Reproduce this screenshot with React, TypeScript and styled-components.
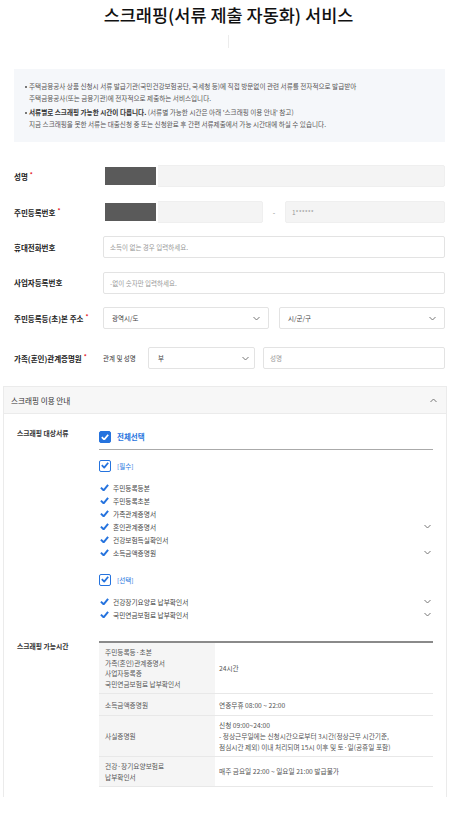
import styled, { createGlobalStyle } from 'styled-components'

const GlobalStyle = createGlobalStyle`
  * { box-sizing: border-box; }
  body {
    margin: 0;
    background: #fff;
    color: #222;
    font-family: 'Noto Sans CJK KR', 'Noto Sans', sans-serif;
  }
`

const BLUE = '#2573de'

const requiredDocs = [
  { name: '주민등록등본' },
  { name: '주민등록초본' },
  { name: '가족관계증명서' },
  { name: '혼인관계증명서', more: true },
  { name: '건강보험득실확인서' },
  { name: '소득금액증명원', more: true },
]

const optionalDocs = [
  { name: '건강장기요양료 납부확인서', more: true },
  { name: '국민연금보험료 납부확인서', more: true },
]

const timeRows = [
  {
    docs: ['주민등록등·초본', '가족(혼인)관계증명서', '사업자등록증', '국민연금보험료 납부확인서'],
    time: ['24시간'],
  },
  { docs: ['소득금액증명원'], time: ['연중무휴 08:00 ~ 22:00'] },
  {
    docs: ['사실증명원'],
    time: [
      '신청 09:00~24:00',
      '- 정상근무일에는 신청시간으로부터 3시간(정상근무 시간기준,',
      '점심시간 제외) 이내 처리되며 15시 이후 및 토·일(공휴일 포함)',
    ],
  },
  { docs: ['건강·장기요양보험료', '납부확인서'], time: ['매주 금요일 22:00 ~ 일요일 21:00 발급불가'] },
]

const Chevron = ({ up }: { up?: boolean }) => (
  <svg width="7" height="5" viewBox="0 0 7 5">
    <polyline
      points={up ? '0.5,4 3.5,1 6.5,4' : '0.5,1 3.5,4 6.5,1'}
      fill="none"
      stroke="#777"
      strokeWidth="1"
    />
  </svg>
)

const Tick = ({ color = BLUE, size = 9 }: { color?: string; size?: number }) => (
  <svg width={size} height={size * 0.8} viewBox="0 0 10 8">
    <polyline points="1,4 4,7 9,1" fill="none" stroke={color} strokeWidth="2.2" strokeLinejoin="round" />
  </svg>
)

const DocItem = ({ name, more }: { name: string; more?: boolean }) => (
  <Item>
    <ItemName>
      <Tick />
      {name}
    </ItemName>
    {more && <Chevron />}
  </Item>
)

export default function App() {
  return (
    <Page>
      <GlobalStyle />
      <Title>스크래핑(서류 제출 자동화) 서비스</Title>
      <TitleRule />

      <Notice>
        <NoticeItem>
          <Bullet />
          <p>
            주택금융공사 상품 신청시 서류 발급기관(국민건강보험공단, 국세청 등)에 직접 방문없이 관련 서류를 전자적으로 발급받아
            <br />
            주택금융공사(또는 금융기관)에 전자적으로 제출하는 서비스입니다.
          </p>
        </NoticeItem>
        <NoticeItem>
          <Bullet />
          <p>
            <strong>서류별로 스크래핑 가능한 시간이 다릅니다.</strong> (서류별 가능한 시간은 아래 '스크래핑 이용 안내' 참고)
            <br />
            지금 스크래핑을 못한 서류는 대출신청 중 또는 신청완료 후 간편 서류제출에서 가능 시간대에 하실 수 있습니다.
          </p>
        </NoticeItem>
      </Notice>

      <Form>
        <Row>
          <Label>
            성명<Req>*</Req>
          </Label>
          <Field disabled>
            <Redact />
          </Field>
        </Row>
        <Row>
          <Label>
            주민등록번호<Req>*</Req>
          </Label>
          <Split>
            <Field disabled>
              <Redact />
            </Field>
            <Dash>-</Dash>
            <Field disabled>
              <FieldText muted>1******</FieldText>
            </Field>
          </Split>
        </Row>
        <Row>
          <Label>휴대전화번호</Label>
          <Field>
            <FieldText muted>소득이 없는 경우 입력하세요.</FieldText>
          </Field>
        </Row>
        <Row>
          <Label>사업자등록번호</Label>
          <Field>
            <FieldText muted>-없이 숫자만 입력하세요.</FieldText>
          </Field>
        </Row>
        <Row>
          <Label>
            주민등록등(초)본 주소<Req>*</Req>
          </Label>
          <Pair>
            <Select>
              <FieldText>광역시/도</FieldText>
              <Chevron />
            </Select>
            <Select>
              <FieldText>시/군/구</FieldText>
              <Chevron />
            </Select>
          </Pair>
        </Row>
        <Row last>
          <Label>
            가족(혼인)관계증명원<Req>*</Req>
          </Label>
          <Relation>
            <SubLabel>관계 및 성명</SubLabel>
            <Select compact>
              <FieldText>부</FieldText>
              <Chevron />
            </Select>
            <Field>
              <FieldText muted>성명</FieldText>
            </Field>
          </Relation>
        </Row>
      </Form>

      <Accordion>
        <AccordionHead>
          <span>스크래핑 이용 안내</span>
          <Chevron up />
        </AccordionHead>
        <AccordionBody>
          <SectionLabel>스크래핑 대상서류</SectionLabel>
          <Docs>
            <CheckAll>
              <Box filled>
                <Tick color="#fff" size={8} />
              </Box>
              전체선택
            </CheckAll>
            <GroupHead>
              <Box>
                <Tick size={8} />
              </Box>
              [필수]
            </GroupHead>
            <ItemList>
              {requiredDocs.map((d) => (
                <DocItem key={d.name} {...d} />
              ))}
            </ItemList>
            <GroupHead second>
              <Box>
                <Tick size={8} />
              </Box>
              [선택]
            </GroupHead>
            <ItemList>
              {optionalDocs.map((d) => (
                <DocItem key={d.name} {...d} />
              ))}
            </ItemList>
          </Docs>

          <SectionLabel>스크래핑 가능시간</SectionLabel>
          <Table>
            {timeRows.map((r) => (
              <TableRow key={r.docs[0]}>
                <DocCell>
                  {r.docs.map((t) => (
                    <div key={t}>{t}</div>
                  ))}
                </DocCell>
                <TimeCell>
                  {r.time.map((t) => (
                    <div key={t}>{t}</div>
                  ))}
                </TimeCell>
              </TableRow>
            ))}
          </Table>
        </AccordionBody>
      </Accordion>
    </Page>
  )
}

const Page = styled.div`
  width: 457px;
  padding-bottom: 16px;
`

const Title = styled.h1`
  margin: 0;
  padding-top: 4px;
  font-size: 17.5px;
  line-height: 22px;
  font-weight: 500;
  text-align: center;
  color: #111;
`

const TitleRule = styled.div`
  width: 1px;
  height: 13px;
  margin: 9px auto 0;
  background: #ececec;
`

const Notice = styled.div`
  margin: 21px 12px 0 14px;
  padding: 12px 10px 12px 11px;
  height: 73px;
  background: #f5f7fa;
  display: flex;
  flex-direction: column;
  gap: 3px;
`

const NoticeItem = styled.div`
  display: flex;
  font-size: 6.6px;
  line-height: 11.5px;
  color: #555;

  p {
    margin: 0;
  }

  strong {
    color: #333;
    font-weight: 700;
  }
`

const Bullet = styled.span`
  width: 4px;
  flex: none;
  display: flex;
  justify-content: flex-start;
  padding-top: 5px;

  &::before {
    content: '';
    width: 1.5px;
    height: 1.5px;
    background: #777;
  }
`

const Form = styled.div`
  margin-top: 23px;
  padding: 0 12px 0 14px;
  display: flex;
  flex-direction: column;
  gap: 13.5px;
`

const Row = styled.div<{ last?: boolean }>`
  display: grid;
  grid-template-columns: 89px 1fr;
  align-items: center;
  height: 22px;
  margin-top: ${({ last }) => (last ? '4.5px' : '0')};
`

const Label = styled.div`
  font-size: 7.5px;
  font-weight: 700;
  color: #222;
  white-space: nowrap;
`

const Req = styled.sup`
  color: #e5141e;
  font-size: 6px;
  margin-left: 2px;
  vertical-align: 3px;
`

const Field = styled.div<{ disabled?: boolean }>`
  flex: 1;
  height: 22px;
  display: flex;
  align-items: center;
  border: 1px solid ${({ disabled }) => (disabled ? '#efefef' : '#e3e3e3')};
  border-radius: 2px;
  background: ${({ disabled }) => (disabled ? '#f4f4f4' : '#fff')};
  min-width: 0;
`

const Redact = styled.span`
  align-self: stretch;
  width: 55px;
  margin: -1px 0 -1px -1px;
  background: #5a5a5a;
  border: 2px solid #fff;
`

const FieldText = styled.span<{ muted?: boolean }>`
  padding-left: 6px;
  font-size: 6.5px;
  color: ${({ muted }) => (muted ? '#999' : '#444')};
  white-space: nowrap;
`

const Split = styled.div`
  display: flex;
  align-items: center;
`

const Dash = styled.span`
  width: 22px;
  text-align: center;
  font-size: 7px;
  color: #888;
`

const Pair = styled.div`
  display: grid;
  grid-template-columns: 1fr 1fr;
  gap: 10px;
`

const Select = styled.div<{ compact?: boolean }>`
  height: 22px;
  display: flex;
  align-items: center;
  justify-content: space-between;
  padding-right: ${({ compact }) => (compact ? '5px' : '8px')};
  border: 1px solid #e3e3e3;
  border-radius: 2px;
  background: #fff;
  width: ${({ compact }) => (compact ? '107px' : 'auto')};
  flex: none;

  ${FieldText} {
    padding-left: ${({ compact }) => (compact ? '9px' : '8px')};
  }
`

const Relation = styled.div`
  display: flex;
  align-items: center;
  gap: 8px;
`

const SubLabel = styled.span`
  font-size: 6.5px;
  color: #333;
  width: 37px;
  white-space: nowrap;
`

const Accordion = styled.section`
  margin: 17px 10px 0 3px;
`

const AccordionHead = styled.div`
  height: 28px;
  display: flex;
  align-items: center;
  justify-content: space-between;
  padding: 0 9px 0 7px;
  background: #f7f7f7;
  border: 1px solid #ebebeb;
  font-size: 7.6px;
  color: #333;
`

const AccordionBody = styled.div`
  display: grid;
  grid-template-columns: 82px 1fr;
  row-gap: 20px;
  padding: 14px 13px 10px;
  border: 1px solid #ebebeb;
  border-top: none;
  border-bottom: none;
`

const SectionLabel = styled.div`
  font-size: 6.8px;
  line-height: 10px;
  font-weight: 700;
  color: #333;
`

const Docs = styled.div`
  padding-top: 3px;
`

const CheckAll = styled.div`
  height: 19px;
  display: flex;
  align-items: flex-start;
  gap: 6px;
  font-size: 7.5px;
  line-height: 12px;
  font-weight: 700;
  color: ${BLUE};
  border-bottom: 1px solid #aaa;
`

const Box = styled.span<{ filled?: boolean }>`
  width: 12px;
  height: 12px;
  flex: none;
  display: flex;
  align-items: center;
  justify-content: center;
  border-radius: 2px;
  background: ${({ filled }) => (filled ? BLUE : '#fff')};
  border: 1.3px solid ${BLUE};
`

const GroupHead = styled.div<{ second?: boolean }>`
  margin-top: ${({ second }) => (second ? '14px' : '9px')};
  height: 13px;
  display: flex;
  align-items: center;
  gap: 6px;
  font-size: 6.5px;
  color: ${BLUE};
`

const ItemList = styled.div`
  margin-top: 9px;
  display: flex;
  flex-direction: column;
`

const Item = styled.div`
  height: 13px;
  display: flex;
  align-items: center;
  justify-content: space-between;
  padding: 0 2px 0 1px;
`

const ItemName = styled.span`
  display: flex;
  align-items: center;
  gap: 4px;
  font-size: 6.7px;
  color: #444;
`

const Table = styled.div`
  border-top: 2px solid #8a8a8a;
`

const TableRow = styled.div`
  display: grid;
  grid-template-columns: 116px 1fr;
  border-bottom: 1px solid #e8e8e8;
`

const DocCell = styled.div`
  background: #f5f5f5;
  padding: 4px 6px;
  font-size: 6.7px;
  line-height: 10.6px;
  color: #555;
  display: flex;
  flex-direction: column;
  justify-content: center;
  min-height: 21px;
`

const TimeCell = styled.div`
  padding: 4px 4px;
  font-size: 6.7px;
  line-height: 10.6px;
  color: #555;
  display: flex;
  flex-direction: column;
  justify-content: center;
  white-space: nowrap;
`
